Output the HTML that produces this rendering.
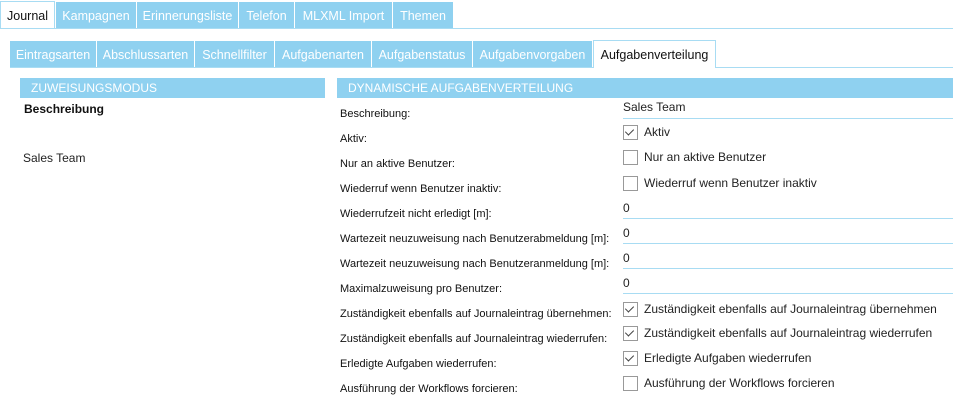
<!DOCTYPE html>
<html><head><meta charset="utf-8"><style>
*{margin:0;padding:0;box-sizing:border-box}
body{width:953px;height:415px;background:#fff;font-family:"Liberation Sans",sans-serif;color:#111;position:relative;overflow:hidden}
.a{position:absolute;white-space:nowrap}
.t{position:absolute;top:2px;height:26px;background:#8fd1f0;color:#fff;font-size:12.5px;line-height:28px;text-align:center}
.s{position:absolute;top:41px;height:26px;background:#8fd1f0;color:#fff;font-size:12.5px;line-height:28px;text-align:center}
.h{position:absolute;top:78px;height:20px;background:#8fd1f0;color:#fff;font-size:12px;line-height:20px;padding-left:11px}
.l{position:absolute;left:340px;font-size:11px}
.c{position:absolute;left:623px;font-size:12px;color:#222;line-height:14px;padding-left:21px}
.c:before{content:"";position:absolute;left:0;top:0;width:13px;height:13px;border:1px solid #999;background:#fff}
.k:after{content:"";position:absolute;left:4px;top:2px;width:4px;height:7px;border:solid #444;border-width:0 1.6px 1.6px 0;transform:rotate(45deg)}
.i{position:absolute;left:623px;width:330px;height:1px;background:#a8dcf3}
.v{position:absolute;left:623px;font-size:12px;color:#222}
</style></head><body>
<div class="a" style="left:0;top:28px;width:953px;height:1px;background:#a8dcf3"></div>
<div class="t" style="left:0;width:55px;background:#fff;color:#111;border:1px solid #a8dcf3;border-bottom:none;height:27px;top:1px">Journal</div>
<div class="t" style="left:56px;width:80px">Kampagnen</div>
<div class="t" style="left:137px;width:101px">Erinnerungsliste</div>
<div class="t" style="left:239px;width:55px">Telefon</div>
<div class="t" style="left:295px;width:97px">MLXML Import</div>
<div class="t" style="left:393px;width:60px">Themen</div>

<div class="a" style="left:10px;top:67px;width:943px;height:1px;background:#a8dcf3"></div>
<div class="s" style="left:10px;width:86px">Eintragsarten</div>
<div class="s" style="left:97px;width:97px">Abschlussarten</div>
<div class="s" style="left:195px;width:79px">Schnellfilter</div>
<div class="s" style="left:275px;width:96px">Aufgabenarten</div>
<div class="s" style="left:372px;width:100px">Aufgabenstatus</div>
<div class="s" style="left:473px;width:119px">Aufgabenvorgaben</div>
<div class="s" style="left:593px;width:123px;background:#fff;color:#111;border:1px solid #a8dcf3;border-bottom:none;height:28px;top:40px">Aufgabenverteilung</div>

<div class="h" style="left:20px;width:305px">ZUWEISUNGSMODUS</div>
<div class="h" style="left:337px;width:616px">DYNAMISCHE AUFGABENVERTEILUNG</div>
<div class="a" style="left:24px;top:102px;font-size:12px;font-weight:bold">Beschreibung</div>
<div class="a" style="left:23px;top:151px;font-size:12px;color:#222">Sales Team</div>

<div class="l" style="top:108px">Beschreibung:</div>
<div class="l" style="top:133px">Aktiv:</div>
<div class="l" style="top:158px">Nur an aktive Benutzer:</div>
<div class="l" style="top:183px">Wiederruf wenn Benutzer inaktiv:</div>
<div class="l" style="top:208px">Wiederrufzeit nicht erledigt [m]:</div>
<div class="l" style="top:233px">Wartezeit neuzuweisung nach Benutzerabmeldung [m]:</div>
<div class="l" style="top:258px">Wartezeit neuzuweisung nach Benutzeranmeldung [m]:</div>
<div class="l" style="top:283px">Maximalzuweisung pro Benutzer:</div>
<div class="l" style="top:308px">Zuständigkeit ebenfalls auf Journaleintrag übernehmen:</div>
<div class="l" style="top:333px">Zuständigkeit ebenfalls auf Journaleintrag wiederrufen:</div>
<div class="l" style="top:358px">Erledigte Aufgaben wiederrufen:</div>
<div class="l" style="top:383px">Ausführung der Workflows forcieren:</div>

<div class="v" style="top:100px">Sales Team</div><div class="i" style="top:118px"></div>
<div class="c k" style="top:125px">Aktiv</div>
<div class="c" style="top:150px">Nur an aktive Benutzer</div>
<div class="c" style="top:176px">Wiederruf wenn Benutzer inaktiv</div>
<div class="v" style="top:201px">0</div><div class="i" style="top:218px"></div>
<div class="v" style="top:226px">0</div><div class="i" style="top:243px"></div>
<div class="v" style="top:251px">0</div><div class="i" style="top:268px"></div>
<div class="v" style="top:276px">0</div><div class="i" style="top:293px"></div>
<div class="c k" style="top:302px">Zuständigkeit ebenfalls auf Journaleintrag übernehmen</div>
<div class="c k" style="top:326px">Zuständigkeit ebenfalls auf Journaleintrag wiederrufen</div>
<div class="c k" style="top:351px">Erledigte Aufgaben wiederrufen</div>
<div class="c" style="top:376px">Ausführung der Workflows forcieren</div>
</body></html>
